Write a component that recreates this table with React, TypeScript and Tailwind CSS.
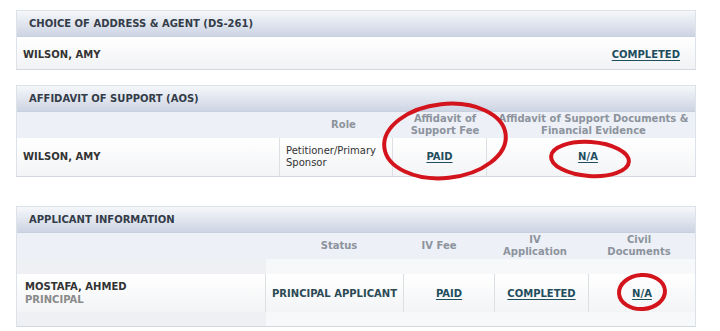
import React from "react";

const font = { fontFamily: '"DejaVu Sans", Verdana, sans-serif' };

function SectionHeader({ title }: { title: string }) {
  return (
    <div className="h-[26px] flex items-center pl-[12px] bg-linear-to-b from-[#f5f7fa] to-[#cdd4e3] border-b border-[#c9d0dd] text-[10px] font-bold text-[#333c48]">
      {title}
    </div>
  );
}

function Link({ children }: { children: React.ReactNode }) {
  return <a className="font-bold underline text-[#1f4d5e] underline-offset-2 cursor-pointer">{children}</a>;
}

export default function App() {
  return (
    <div className="relative w-[720px] h-[331px] bg-white overflow-hidden" style={font}>
      <div className="flex flex-col pt-[10px] pl-[16px] w-[696px]">
        {/* DS-261 */}
        <div className="w-[680px] border border-[#dde1e8] border-b-[#d3d7de]">
          <SectionHeader title="CHOICE OF ADDRESS & AGENT (DS-261)" />
          <div className="h-[32px] flex items-center justify-between pl-[6px] pr-[15px] pt-[3px] bg-linear-to-b from-white to-[#f1f2f5] text-[10px]">
            <span className="font-bold text-[#333]">WILSON, AMY</span>
            <Link>COMPLETED</Link>
          </div>
        </div>

        {/* AOS */}
        <div className="w-[680px] mt-[15px] border border-[#dde1e8] border-b-[#d3d7de]">
          <SectionHeader title="AFFIDAVIT OF SUPPORT (AOS)" />
          <div className="grid grid-cols-[264px_113px_94px_1fr] h-[26px] bg-[#edf0f6] text-[10px] leading-[12px] font-bold text-[#8c939d] text-center">
            <div />
            <div className="flex items-center justify-center pl-[12px]">Role</div>
            <div className="flex items-center justify-center pl-[8px]">Affidavit of<br />Support Fee</div>
            <div className="flex items-center justify-center pl-[4px]">Affidavit of Support Documents &amp;<br />Financial Evidence</div>
          </div>
          <div className="grid grid-cols-[263px_113px_94px_1fr] h-[38px] bg-linear-to-b from-white to-[#f3f4f6] text-[10px] leading-[12px]">
            <div className="flex items-center pl-[6px] font-bold text-[#333] border-r border-[#dcdfe4]">WILSON, AMY</div>
            <div className="flex items-center pl-[6px] text-[#333] border-r border-[#dcdfe4]">Petitioner/Primary<br />Sponsor</div>
            <div className="flex items-center justify-center border-r border-[#dcdfe4]"><Link>PAID</Link></div>
            <div className="flex items-center justify-center pr-[6px]"><Link>N/A</Link></div>
          </div>
        </div>

        {/* Applicant */}
        <div className="w-[680px] mt-[29px] border border-[#dde1e8] border-b-[#d3d7de]">
          <SectionHeader title="APPLICANT INFORMATION" />
          <div className="grid grid-cols-[250px_138px_91px_94px_1fr] h-[26px] bg-[#edf0f6] text-[10px] leading-[12px] font-bold text-[#8c939d] text-center">
            <div />
            <div className="flex items-center justify-center pl-[6px]">Status</div>
            <div className="flex items-center justify-center pr-[23px]">IV Fee</div>
            <div className="flex items-center justify-center pr-[16px]">IV<br />Application</div>
            <div className="flex items-center justify-center pr-[7px]">Civil<br />Documents</div>
          </div>
          <div className="grid grid-cols-[249px_1fr] h-[15px]">
            <div className="bg-[#eff0f3]" />
            <div className="bg-[#f7f8fa]" />
          </div>
          <div className="grid grid-cols-[249px_138px_91px_94px_1fr] h-[38px] bg-linear-to-b from-white to-[#f3f4f6] text-[10px] leading-[13px]">
            <div className="flex flex-col justify-center pl-[8px] font-bold border-r border-[#dcdfe4]">
              <span className="text-[#333]">MOSTAFA, AHMED</span>
              <span className="text-[#8a8a8a]">PRINCIPAL</span>
            </div>
            <div className="flex items-center justify-center font-bold text-[#2c4a55] border-r border-[#dcdfe4]">PRINCIPAL APPLICANT</div>
            <div className="flex items-center justify-center border-r border-[#dcdfe4]"><Link>PAID</Link></div>
            <div className="flex items-center justify-center border-r border-[#dcdfe4]"><Link>COMPLETED</Link></div>
            <div className="flex items-center justify-center"><Link>N/A</Link></div>
          </div>
          <div className="grid grid-cols-[249px_1fr] h-[14px]">
            <div className="bg-[#eff0f3]" />
            <div className="bg-[#f7f8fa]" />
          </div>
        </div>
      </div>

      {/* red annotation circles */}
      <svg className="absolute inset-0 pointer-events-none" width="720" height="331" viewBox="0 0 720 331">
        <g fill="none" stroke="#d4141c" strokeWidth="4">
          <ellipse cx="445" cy="141" rx="61" ry="37" transform="rotate(-6 445 141)" />
          <ellipse cx="590" cy="159" rx="39" ry="17" transform="rotate(4 590 159)" />
          <ellipse cx="642" cy="292" rx="23" ry="17" transform="rotate(-4 642 292)" />
        </g>
      </svg>
    </div>
  );
}
